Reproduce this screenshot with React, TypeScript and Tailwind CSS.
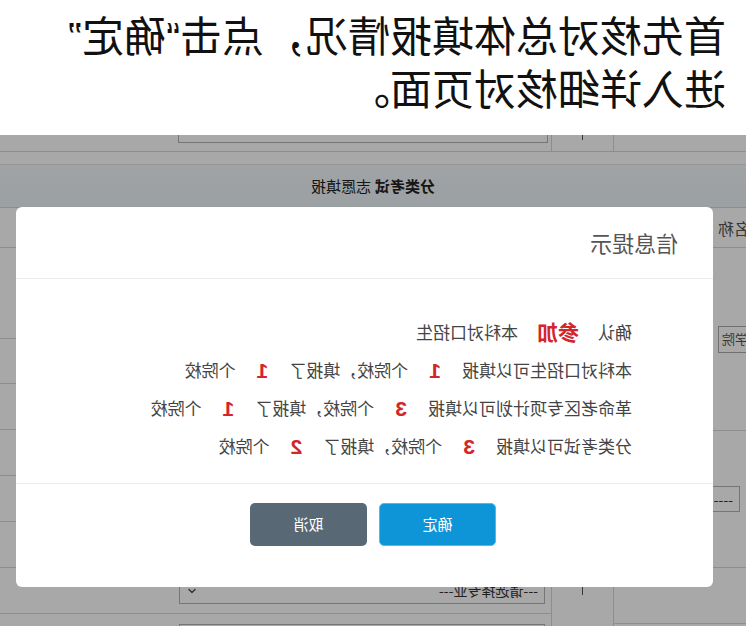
import { ChevronDown } from 'lucide-react';

const cjk = { fontFamily: '"Noto Sans CJK SC", "Noto Sans", sans-serif' };
const latin = { fontFamily: '"Liberation Sans", Arial, sans-serif' };

interface QuotaRow {
  label: string;
  allowed: number;
  filled: number;
}

const quotas: QuotaRow[] = [
  { label: '本科对口招生可以填报', allowed: 1, filled: 1 },
  { label: '革命老区专项计划可以填报', allowed: 3, filled: 1 },
  { label: '分类考试可以填报', allowed: 3, filled: 2 },
];

function Num({ value }: { value: number | string }) {
  return (
    <span className="mx-[21px] text-[21px] font-bold leading-none text-[#d4262a]" style={latin}>
      {value}
    </span>
  );
}

function SelectBox({ label, className = '' }: { label: string; className?: string }) {
  return (
    <div
      className={`flex h-[26px] items-center justify-between border border-[#b4b4b4] bg-white px-[6px] text-[14px] text-[#333] ${className}`}
    >
      <span className="whitespace-nowrap">{label}</span>
      <ChevronDown size={12} strokeWidth={3} className="text-[#555]" />
    </div>
  );
}

function InfoDialog() {
  return (
    <div className="absolute left-[33px] top-[72px] flex h-[380px] w-[697px] flex-col rounded-[6px] bg-white">
      <div className="flex h-[72px] shrink-0 items-center border-b border-[#ececec] pl-[35px]">
        <span className="text-[22px] text-[#555]">信息提示</span>
      </div>
      <div className="flex flex-1 flex-col pl-[81px] pt-[34px] text-[17px] text-[#444]">
        <div className="flex h-[38px] items-center whitespace-nowrap">
          <span>确认</span>
          <span className="mx-[19px] text-[21px] font-bold text-[#d4262a]">参加</span>
          <span>本科对口招生</span>
        </div>
        {quotas.map((q) => (
          <div key={q.label} className="flex h-[38px] items-center whitespace-nowrap">
            <span>{q.label}</span>
            <Num value={q.allowed} />
            <span>个院校，填报了</span>
            <Num value={q.filled} />
            <span>个院校</span>
          </div>
        ))}
      </div>
      <div className="flex h-[104px] shrink-0 justify-center gap-[12px] border-t border-[#ececec] pr-[17px] pt-[19px]">
        <button className="h-[43px] w-[117px] rounded-[5px] border border-[#3ec3f0] bg-[#0d95d8] text-[15px] text-white">
          确定
        </button>
        <button className="h-[43px] w-[117px] rounded-[5px] bg-[#586874] text-[15px] text-white">
          取消
        </button>
      </div>
    </div>
  );
}

export default function App() {
  return (
    <div className="relative h-[626px] w-[746px] -scale-x-100 overflow-hidden bg-white" style={cjk}>
      {/* caption above the screenshot */}
      <div className="h-[135px] pl-[20px] pt-[9px] text-[42px] leading-[49px] text-[#111]">
        <div className="whitespace-nowrap">
          首先核对总体填报情况，点击<span style={latin}>“</span>确定<span style={latin}>”</span>
        </div>
        <div className="whitespace-nowrap">进入详细核对页面。</div>
      </div>

      {/* page behind the dialog */}
      <div className="relative h-[491px] overflow-hidden bg-white text-[13px] text-[#333]">
        <div className="flex h-[17px] border-b border-[#d6d6d6]">
          <div className="w-[133px] border-r border-[#d6d6d6]" />
          <div className="flex w-[62px] justify-center border-r border-[#d6d6d6]">
            <div className="h-[5px] w-px bg-[#555]" />
          </div>
          <div className="flex-1">
            <div className="ml-[3px] h-[8px] w-[370px] border-x border-b border-[#b4b4b4]" />
          </div>
        </div>
        <div className="h-[13px] border-b border-[#e4e4e4] bg-white" />
        <div className="flex h-[42px] items-center justify-center bg-gradient-to-b from-[#f4f8fa] to-[#ecf3f8] text-[15px] text-[#222]">
          <span className="font-bold">分类考试</span>
          <span className="ml-[4px]">志愿填报</span>
        </div>

        <div className="flex border-t border-[#d6d6d6]">
          <div className="flex w-[133px] flex-col border-r border-[#d6d6d6]">
            <div className="flex h-[40px] items-center border-b border-[#d6d6d6]">
              <div className="flex w-[28px] justify-end overflow-hidden whitespace-nowrap text-[16px] text-[#555]">
                学校名称
              </div>
            </div>
            <div className="flex h-[183px] items-center border-b border-[#d6d6d6]">
              <div className="flex h-[27px] w-[28px] items-center justify-end overflow-hidden border-r border-y border-[#aaa] pr-[3px] whitespace-nowrap text-[#555]">
                选学院
              </div>
            </div>
            <div className="flex h-[137px] items-center border-b border-[#d6d6d6]">
              <SelectBox label="---- 请选择 ----" className="ml-[6px] w-[300px] px-[2px]" />
            </div>
            <div className="h-[56px] border-b border-[#d6d6d6]" />
            <div className="flex-1" />
          </div>
          <div className="flex w-[62px] flex-col border-r border-[#d6d6d6]">
            <div className="h-[360px]" />
            <div className="flex h-[46px] items-center justify-center">
              <div className="h-[8px] w-px bg-[#555]" />
            </div>
          </div>
          <div className="flex flex-1 flex-col">
            <div className="h-[40px] border-b border-[#d6d6d6]" />
            <div className="h-[91px] border-b border-[#d6d6d6]" />
            <div className="h-[45px] border-b border-[#d6d6d6]" />
            <div className="h-[46px] border-b border-[#d6d6d6]" />
            <div className="h-[46px] border-b border-[#d6d6d6]" />
            <div className="h-[46px] border-b border-[#d6d6d6]" />
            <div className="h-[46px] border-b border-[#d6d6d6]" />
            <div className="flex h-[46px] items-center border-b border-[#d6d6d6]">
              <SelectBox label="---请选择专业---" className="ml-[6px] w-[366px]" />
            </div>
            <div className="flex h-[46px] items-center">
              <SelectBox label="---请选择专业---" className="ml-[6px] w-[366px]" />
            </div>
          </div>
        </div>

        <div className="absolute inset-0 bg-black/[0.34]" />
        <InfoDialog />
      </div>
    </div>
  );
}
